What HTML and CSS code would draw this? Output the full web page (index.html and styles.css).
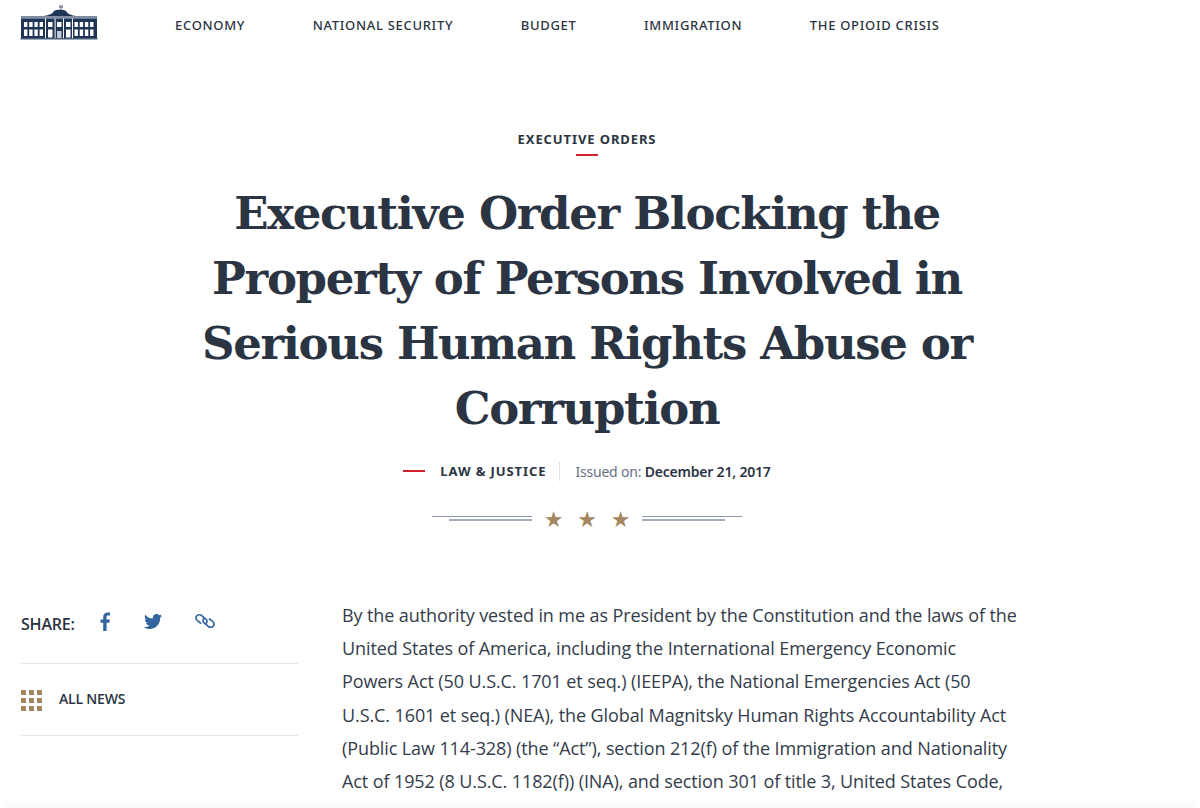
FILE: index.html
```html
<!DOCTYPE html>
<html lang="en">

    <head>
        <meta charset="UTF-8">
        <meta name="viewport" content="width=device-width, initial-scale=1.0">
        <title>Executive Order Blocking the Property of Persons Involved in Serious Human Rights Abuse or Corruption</title>
        <link rel="stylesheet" href="styles.css">
    </head>

    <body>
        <header class="site-header">
            <a class="logo" href="#" aria-label="The White House">
                <svg width="78" height="36" viewBox="0 0 78 36">
                    <path d="M41 1V6" stroke="#6b7687" stroke-width="1"/>
                    <path d="M39 1.500h4v2.500h-4z" fill="#8b95a5"/>
                    <path d="M23 12c5-.6 9-1.500 11-5 2-1.600 10-1.600 12 0 2 3.500 6 4.400 10 5z" fill="#1f3556"/>
                    <path d="M1 12h76v2.500H1z" fill="#7f8ea3"/>
                    <path d="M1 14.500h76v19.500H1z" fill="#1f3556"/>
                    <path d="M.5 34h77v1.500H.5z" fill="#4a5d7a"/>
                    <g fill="#fff">
                        <rect x="4" y="18" width="3.400" height="5"/><rect x="9.200" y="18" width="3.400" height="5"/><rect x="14.400" y="18" width="3.400" height="5"/><rect x="19.600" y="18" width="3.400" height="5"/>
                        <rect x="4" y="25.500" width="3.400" height="6.500"/><rect x="9.200" y="25.500" width="3.400" height="6.500"/><rect x="14.400" y="25.500" width="3.400" height="6.500"/><rect x="19.600" y="25.500" width="3.400" height="6.500"/>
                        <rect x="54.500" y="18" width="3.400" height="5"/><rect x="59.700" y="18" width="3.400" height="5"/><rect x="64.900" y="18" width="3.400" height="5"/><rect x="70.100" y="18" width="3.400" height="5"/>
                        <rect x="54.500" y="25.500" width="3.400" height="6.500"/><rect x="59.700" y="25.500" width="3.400" height="6.500"/><rect x="64.900" y="25.500" width="3.400" height="6.500"/><rect x="70.100" y="25.500" width="3.400" height="6.500"/>
                        <rect x="28" y="18" width="4.500" height="5"/><rect x="37" y="18" width="4.500" height="5"/><rect x="46" y="18" width="4.500" height="5"/>
                        <rect x="28" y="25.500" width="4.500" height="8"/><rect x="46" y="25.500" width="4.500" height="8"/>
                        <rect x="25" y="14.500" width="1" height="19.500"/><rect x="34.600" y="14.500" width="1" height="19.500"/><rect x="43" y="14.500" width="1" height="19.500"/><rect x="52" y="14.500" width="1" height="19.500"/>
                        <rect x="37" y="27" width="4.500" height="7" fill="#c5ccd6"/>
                    </g>
                </svg>
            </a>
            <nav class="main-nav">
                <a href="#">Economy</a>
                <a href="#">National Security</a>
                <a href="#">Budget</a>
                <a href="#">Immigration</a>
                <a href="#">The Opioid Crisis</a>
            </nav>
        </header>

        <main class="page">
            <section class="article-head">
                <div class="kicker">Executive Orders</div>
                <h1>Executive Order Blocking the Property of Persons Involved in Serious Human Rights Abuse or Corruption</h1>
                <div class="meta">
                    <span class="meta-dash"></span>
                    <span class="meta-topic">Law &amp; Justice</span>
                    <span class="meta-date">Issued on: <strong>December 21, 2017</strong></span>
                </div>
                <div class="stars">
                    <span class="rule rule-left"></span>
                    <span class="star">★</span>
                    <span class="star">★</span>
                    <span class="star">★</span>
                    <span class="rule rule-right"></span>
                </div>
            </section>

            <section class="article-body">
                <aside class="sidebar">
                    <div class="share">
                        <span class="share-label">Share:</span>
                        <a href="#" class="share-icon" aria-label="Facebook">
                            <svg width="11" height="19" viewBox="0 0 11 19"><path fill="#33659f" d="M3.200 19v-8.300H.5V7.500h2.700V5c0-3 1.700-4.500 4.300-4.500 1.200 0 2.200.1 2.500.1v3H8.200C6.800 3.600 6.600 4.200 6.600 5.200v2.300h3.300l-.5 3.200H6.600V19z"/></svg>
                        </a>
                        <a href="#" class="share-icon" aria-label="Twitter">
                            <svg width="18" height="15" viewBox="0 0 24 20"><path fill="#33659f" d="M24 2.400c-.9.400-1.800.7-2.800.8 1-.6 1.800-1.600 2.200-2.700-1 .6-2 1-3.100 1.200C19.300.7 18 0 16.600 0c-2.700 0-4.900 2.200-4.900 4.900 0 .4 0 .8.100 1.100C7.700 5.800 4.100 3.900 1.700.9 1.200 1.600 1 2.500 1 3.400c0 1.700.9 3.200 2.200 4.100-.8 0-1.600-.2-2.200-.6v.1c0 2.400 1.700 4.400 3.900 4.800-.4.100-.8.200-1.300.2-.3 0-.6 0-.9-.1.600 2 2.400 3.400 4.600 3.400-1.700 1.300-3.800 2.100-6.100 2.100-.4 0-.8 0-1.200-.1C2.200 19.200 4.800 20 7.500 20c9.100 0 14-7.500 14-14v-.6c1-.7 1.800-1.600 2.500-3z"/></svg>
                        </a>
                        <a href="#" class="share-icon" aria-label="Copy link">
                            <svg width="20" height="18" viewBox="0 0 20 18" fill="none" stroke="#33659f" stroke-width="1.700" stroke-linecap="round"><path d="M11.500 11C12.500 9 11.500 7.500 10.500 6.800L7 3.800C5 2.300 2.800 2.500 1.700 4 .6 5.600 1.200 7.700 2.800 8.900L5.500 11"/><path d="M8.500 7C7.500 9 8.500 10.500 9.500 11.200L13 14.200C15 15.700 17.200 15.500 18.300 14 19.400 12.400 18.800 10.300 17.200 9.100L14.500 7"/></svg>
                        </a>
                    </div>
                    <a href="#" class="all-news">
                        <span class="dots"><i></i><i></i><i></i><i></i><i></i><i></i><i></i><i></i><i></i></span>
                        All News
                    </a>
                </aside>
                <div class="article-text">
                    <p>By the authority vested in me as President by the Constitution and the laws of the<br>
                    United States of America, including the International Emergency Economic<br>
                    Powers Act (50 U.S.C. 1701 et seq.) (IEEPA), the National Emergencies Act (50<br>
                    U.S.C. 1601 et seq.) (NEA), the Global Magnitsky Human Rights Accountability Act<br>
                    (Public Law 114-328) (the “Act”), section 212(f) of the Immigration and Nationality<br>
                    Act of 1952 (8 U.S.C. 1182(f)) (INA), and section 301 of title 3, United States Code,</p>
                </div>
            </section>
        </main>

        <div class="bottom-fade"></div>
    </body>

</html>
```
FILE: styles.css
```css
html,
body {
    margin: 0;
    padding: 0;
    height: 808px;
    overflow: hidden;
}

body {
    background: white;
    color: #2b3443;
    font-family: 'Open Sans', Arial, sans-serif;
}

a {
    color: inherit;
    text-decoration: none;
}

.site-header {
    display: flex;
    align-items: center;
    height: 50px;
    padding-left: 20px;
}

.logo {
    display: block;
    width: 78px;
    height: 36px;
    margin-top: -6px;
}

.main-nav {
    display: flex;
    gap: 67.500px;
    margin-left: 77px;
}

.main-nav a {
    font-family: 'Noto Sans', sans-serif;
    font-size: 13px;
    font-weight: 500;
    letter-spacing: 0.7px;
    text-transform: uppercase;
}

.page {
    padding: 0 47px 0 21px;
}

.article-head {
    text-align: center;
}

.kicker {
    margin-top: 80px;
    font-family: 'Noto Sans', sans-serif;
    font-size: 13px;
    line-height: 18px;
    font-weight: 700;
    letter-spacing: 0.9px;
    text-transform: uppercase;
}

.kicker::after {
    content: '';
    display: block;
    width: 22px;
    height: 2px;
    margin: 6px auto 0;
    background: #d0232b;
}

h1 {
    width: 800px;
    margin: 25px auto 0;
    font-family: 'DejaVu Serif', serif;
    font-size: 45px;
    line-height: 65px;
    font-weight: 700;
    letter-spacing: -1.35px;
}

.meta {
    display: flex;
    justify-content: center;
    align-items: center;
    margin-top: 20px;
    height: 20px;
    font-family: 'Noto Sans', sans-serif;
    font-size: 14px;
}

.meta-dash {
    width: 22px;
    height: 2px;
    margin-right: 15px;
    background: #d0232b;
}

.meta-topic {
    padding-right: 13px;
    border-right: 1px solid #dfe2e6;
    font-size: 13px;
    line-height: 19px;
    font-weight: 700;
    letter-spacing: 0.9px;
    text-transform: uppercase;
}

.meta-date {
    padding-left: 15px;
    color: #667083;
    letter-spacing: -0.2px;
}

.meta-date strong {
    color: #2b3443;
    font-weight: 600;
}

.stars {
    display: flex;
    justify-content: center;
    align-items: center;
    margin-top: 26px;
    height: 24px;
}

.star {
    width: 33.500px;
    margin-top: 2px;
    color: #a5875f;
    font-family: 'DejaVu Sans', sans-serif;
    font-size: 22px;
    line-height: 24px;
    text-align: center;
}

.rule {
    display: block;
    width: 100px;
    height: 4px;
    margin-top: -1px;
    border-top: 1px solid #8e9aab;
    position: relative;
}

.rule::after {
    content: '';
    position: absolute;
    top: 2px;
    height: 2px;
    width: 83px;
    background: #a3adba;
}

.rule-left {
    margin-right: 5px;
}

.rule-left::after {
    right: 0;
}

.rule-right {
    margin-left: 5px;
}

.rule-right::after {
    left: 0;
}

.article-body {
    display: flex;
    margin-top: 57px;
}

.sidebar {
    width: 277px;
    flex-shrink: 0;
}

.share {
    display: flex;
    align-items: center;
    height: 78px;
    border-bottom: 1px solid #e4e6e9;
    margin-top: -3px;
}

.share-label {
    font-size: 16px;
    font-weight: 600;
    letter-spacing: -0.2px;
    text-transform: uppercase;
}

.share-icon {
    display: block;
    height: 20px;
    margin-top: -4px;
}

.share-label + .share-icon {
    margin-left: 25px;
}

.share-icon + .share-icon {
    margin-left: 33px;
}

.all-news {
    display: flex;
    align-items: center;
    height: 72px;
    padding-bottom: 2px;
    box-sizing: border-box;
    border-bottom: 1px solid #e4e6e9;
    font-size: 14px;
    font-weight: 600;
    letter-spacing: -0.2px;
    text-transform: uppercase;
}

.dots {
    display: grid;
    grid-template-columns: repeat(3, 5px);
    gap: 3px;
    margin-top: 4px;
    margin-right: 17px;
}

.dots i {
    display: block;
    width: 5px;
    height: 5px;
    background: #a5875f;
}

.article-text {
    margin-left: 44px;
    font-size: 18px;
    line-height: 33.200px;
    color: #333c4a;
    letter-spacing: -0.1px;
}

.article-text p {
    margin: 0;
    margin-top: 11px;
    white-space: nowrap;
}

.bottom-fade {
    position: fixed;
    left: 5px;
    right: 5px;
    bottom: 0;
    height: 10px;
    background: linear-gradient(to bottom, rgba(0, 0, 0, 0), rgba(0, 0, 0, 0.02));
}
```
